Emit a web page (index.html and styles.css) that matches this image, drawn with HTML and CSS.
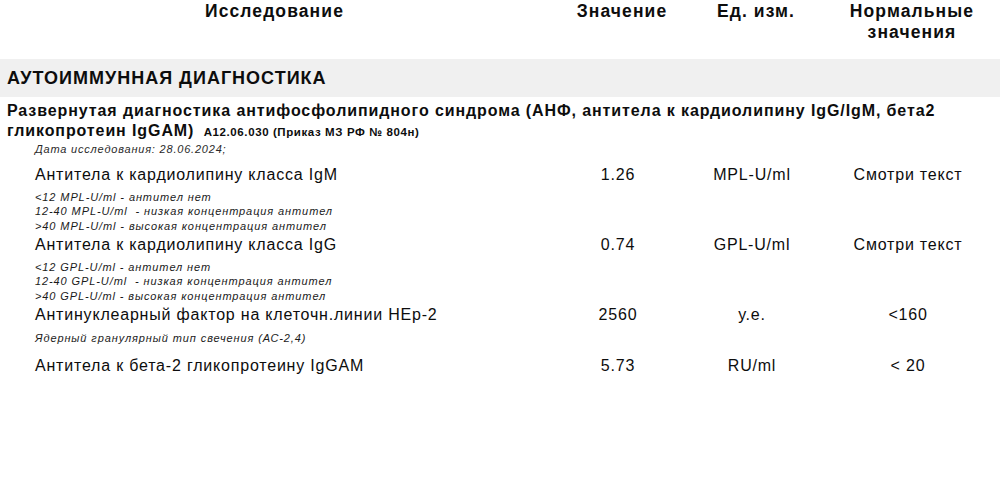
FILE: index.html
```html
<!DOCTYPE html>
<html lang="ru">
<head>
<meta charset="utf-8">
<link rel="stylesheet" href="styles.css">
</head>
<body>
<div class="page">
  <div class="thead">
    <div class="th th-name">Исследование</div>
    <div class="th th-value">Значение</div>
    <div class="th th-unit">Ед. изм.</div>
    <div class="th th-norm">Нормальные<br>значения</div>
  </div>

  <div class="section">АУТОИММУННАЯ ДИАГНОСТИКА</div>

  <div class="group">
    <div class="group-title">Развернутая диагностика антифосфолипидного синдрома (АНФ, антитела к кардиолипину IgG/IgM, бета2 гликопротеин IgGAM) <span class="code">A12.06.030 (Приказ МЗ РФ № 804н)</span></div>
    <div class="date">Дата исследования: 28.06.2024;</div>

    <div class="row">
      <div class="name">Антитела к кардиолипину класса IgM</div>
      <div class="value">1.26</div>
      <div class="unit">MPL-U/ml</div>
      <div class="norm">Смотри текст</div>
    </div>
    <div class="notes">
      <div>&lt;12 MPL-U/ml - антител нет</div>
      <div>12-40 MPL-U/ml&nbsp; - низкая концентрация антител</div>
      <div>&gt;40 MPL-U/ml - высокая концентрация антител</div>
    </div>

    <div class="row">
      <div class="name">Антитела к кардиолипину класса IgG</div>
      <div class="value">0.74</div>
      <div class="unit">GPL-U/ml</div>
      <div class="norm">Смотри текст</div>
    </div>
    <div class="notes">
      <div>&lt;12 GPL-U/ml - антител нет</div>
      <div>12-40 GPL-U/ml&nbsp; - низкая концентрация антител</div>
      <div>&gt;40 GPL-U/ml - высокая концентрация антител</div>
    </div>

    <div class="row">
      <div class="name">Антинуклеарный фактор на клеточн.линии НЕр-2</div>
      <div class="value">2560</div>
      <div class="unit">у.е.</div>
      <div class="norm">&lt;160</div>
    </div>
    <div class="notes notes-single">
      <div>Ядерный гранулярный тип свечения (АС-2,4)</div>
    </div>

    <div class="row">
      <div class="name">Антитела к бета-2 гликопротеину IgGAM</div>
      <div class="value">5.73</div>
      <div class="unit">RU/ml</div>
      <div class="norm">&lt; 20</div>
    </div>
  </div>
</div>
</body>
</html>
```

FILE: styles.css
```css
html, body {
  margin: 0;
  padding: 0;
  background: #ffffff;
}

body {
  font-family: "Liberation Sans", Arial, sans-serif;
  color: #0d0d0d;
}

.page {
  width: 1000px;
}

.thead {
  display: grid;
  grid-template-columns: 568px 100px 168px 144px;
  height: 59px;
  padding-top: 1px;
  padding-left: 4px;
  box-sizing: border-box;
}

.th {
  font-weight: bold;
  font-size: 17.5px;
  line-height: 21px;
  letter-spacing: 1.1px;
  text-align: center;
}

.th-name { padding-right: 27px; }

.section {
  background: #f0f0f0;
  height: 38px;
  display: flex;
  align-items: center;
  padding-left: 7px;
  font-weight: bold;
  font-size: 18px;
  letter-spacing: 1px;
}

.group {
  padding-top: 4px;
}

.group-title {
  padding-left: 7px;
  padding-right: 25px;
  font-weight: bold;
  font-size: 16px;
  line-height: 20px;
  letter-spacing: 0.9px;
}

.code {
  font-size: 11.5px;
  letter-spacing: 0.6px;
  margin-left: 4px;
}

.date {
  padding-left: 35px;
  font-style: italic;
  font-size: 11px;
  line-height: 14px;
  letter-spacing: 0.8px;
  color: #2a2a2a;
  margin-bottom: 9px;
}

.row {
  display: grid;
  grid-template-columns: 568px 100px 168px 144px;
  font-size: 16px;
  line-height: 20px;
  letter-spacing: 0.8px;
}

.name {
  padding-left: 35px;
  white-space: nowrap;
}

.value, .unit, .norm {
  text-align: center;
}

.notes {
  padding-left: 35px;
  font-style: italic;
  font-size: 11px;
  line-height: 14.5px;
  letter-spacing: 0.9px;
  margin-top: 4.5px;
  margin-bottom: 2px;
  color: #1a1a1a;
}

.notes-single {
  margin-top: 6px;
  margin-bottom: 10px;
}
```
